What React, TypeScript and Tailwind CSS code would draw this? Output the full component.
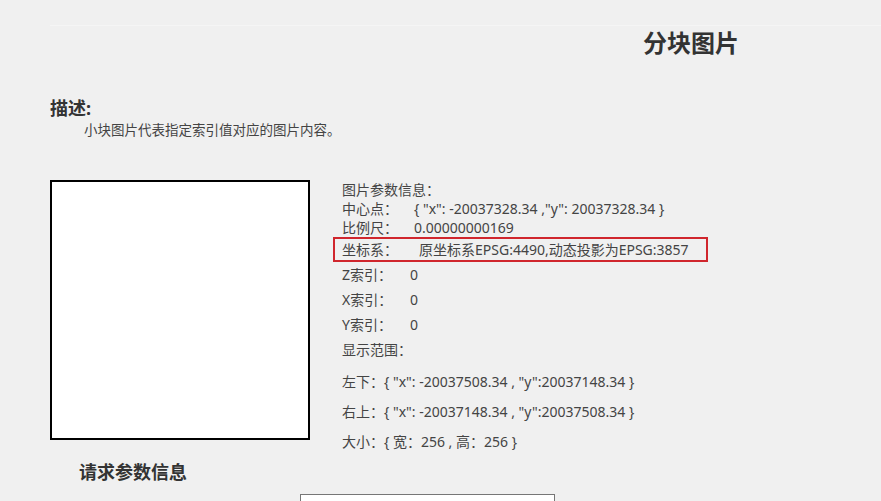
import React from "react";

const font = { fontFamily: '"Noto Sans", "Noto Sans CJK SC", sans-serif' };

export default function App() {
  return (
    <div className="min-h-[501px] w-full overflow-hidden bg-[#f0f0f0] text-[#333]" style={font}>
      <div className="ml-[50px] mt-[25px] h-px bg-[#f5f5f5]" />
      <h1 className="ml-[643px] mt-[1px] text-[24px] leading-[32px] font-bold text-[#333]">分块图片</h1>
      <h2 className="ml-[50px] mt-[37px] text-[18px] leading-[24px] font-bold">描述:</h2>
      <p className="ml-[84px] text-[13.5px] leading-[20px] text-[#444]">小块图片代表指定索引值对应的图片内容。</p>
      <div className="mt-[40px] flex">
        <div className="ml-[50px] h-[260px] w-[260px] shrink-0 border-2 border-black bg-white" />
        <div className="ml-[23px] flex flex-col text-[14px] text-[#444]">
          <div className="flex h-[19px] items-center pl-[9px]">图片参数信息：</div>
          <div className="flex h-[19px] items-center pl-[9px]">
            <span className="w-[72px]">中心点：</span>
            <span className="whitespace-nowrap">{'{ "x": -20037328.34 ,"y": 20037328.34 }'}</span>
          </div>
          <div className="flex h-[19px] items-center pl-[9px]">
            <span className="w-[72px]">比例尺：</span>
            <span>0.00000000169</span>
          </div>
          <div className="flex h-[25px] w-[375px] items-center border-2 border-[#d0262d] pl-[7px]">
            <span className="w-[77px]">坐标系：</span>
            <span className="whitespace-nowrap">原坐标系EPSG:4490,动态投影为EPSG:3857</span>
          </div>
          <div className="flex h-[25px] items-center pl-[9px]">
            <span className="w-[68px]">Z索引：</span>
            <span>0</span>
          </div>
          <div className="flex h-[25px] items-center pl-[9px]">
            <span className="w-[68px]">X索引：</span>
            <span>0</span>
          </div>
          <div className="flex h-[25px] items-center pl-[9px]">
            <span className="w-[68px]">Y索引：</span>
            <span>0</span>
          </div>
          <div className="flex h-[25px] items-center pl-[9px]">显示范围：</div>
          <div className="mt-[4px] flex h-[30px] items-center whitespace-nowrap pl-[9px]">{'左下：{ "x": -20037508.34 , "y":20037148.34 }'}</div>
          <div className="flex h-[30px] items-center whitespace-nowrap pl-[9px]">{'右上：{ "x": -20037148.34 , "y":20037508.34 }'}</div>
          <div className="flex h-[30px] items-center whitespace-nowrap pl-[9px]">{'大小：{ 宽：256 , 高：256 }'}</div>
        </div>
      </div>
      <h2 className="ml-[79px] mt-[4px] text-[18px] leading-[24px] font-bold">请求参数信息</h2>
      <div className="ml-[300px] mt-[10px] h-[30px] w-[255px] border border-[#767676] bg-white" />
    </div>
  );
}
